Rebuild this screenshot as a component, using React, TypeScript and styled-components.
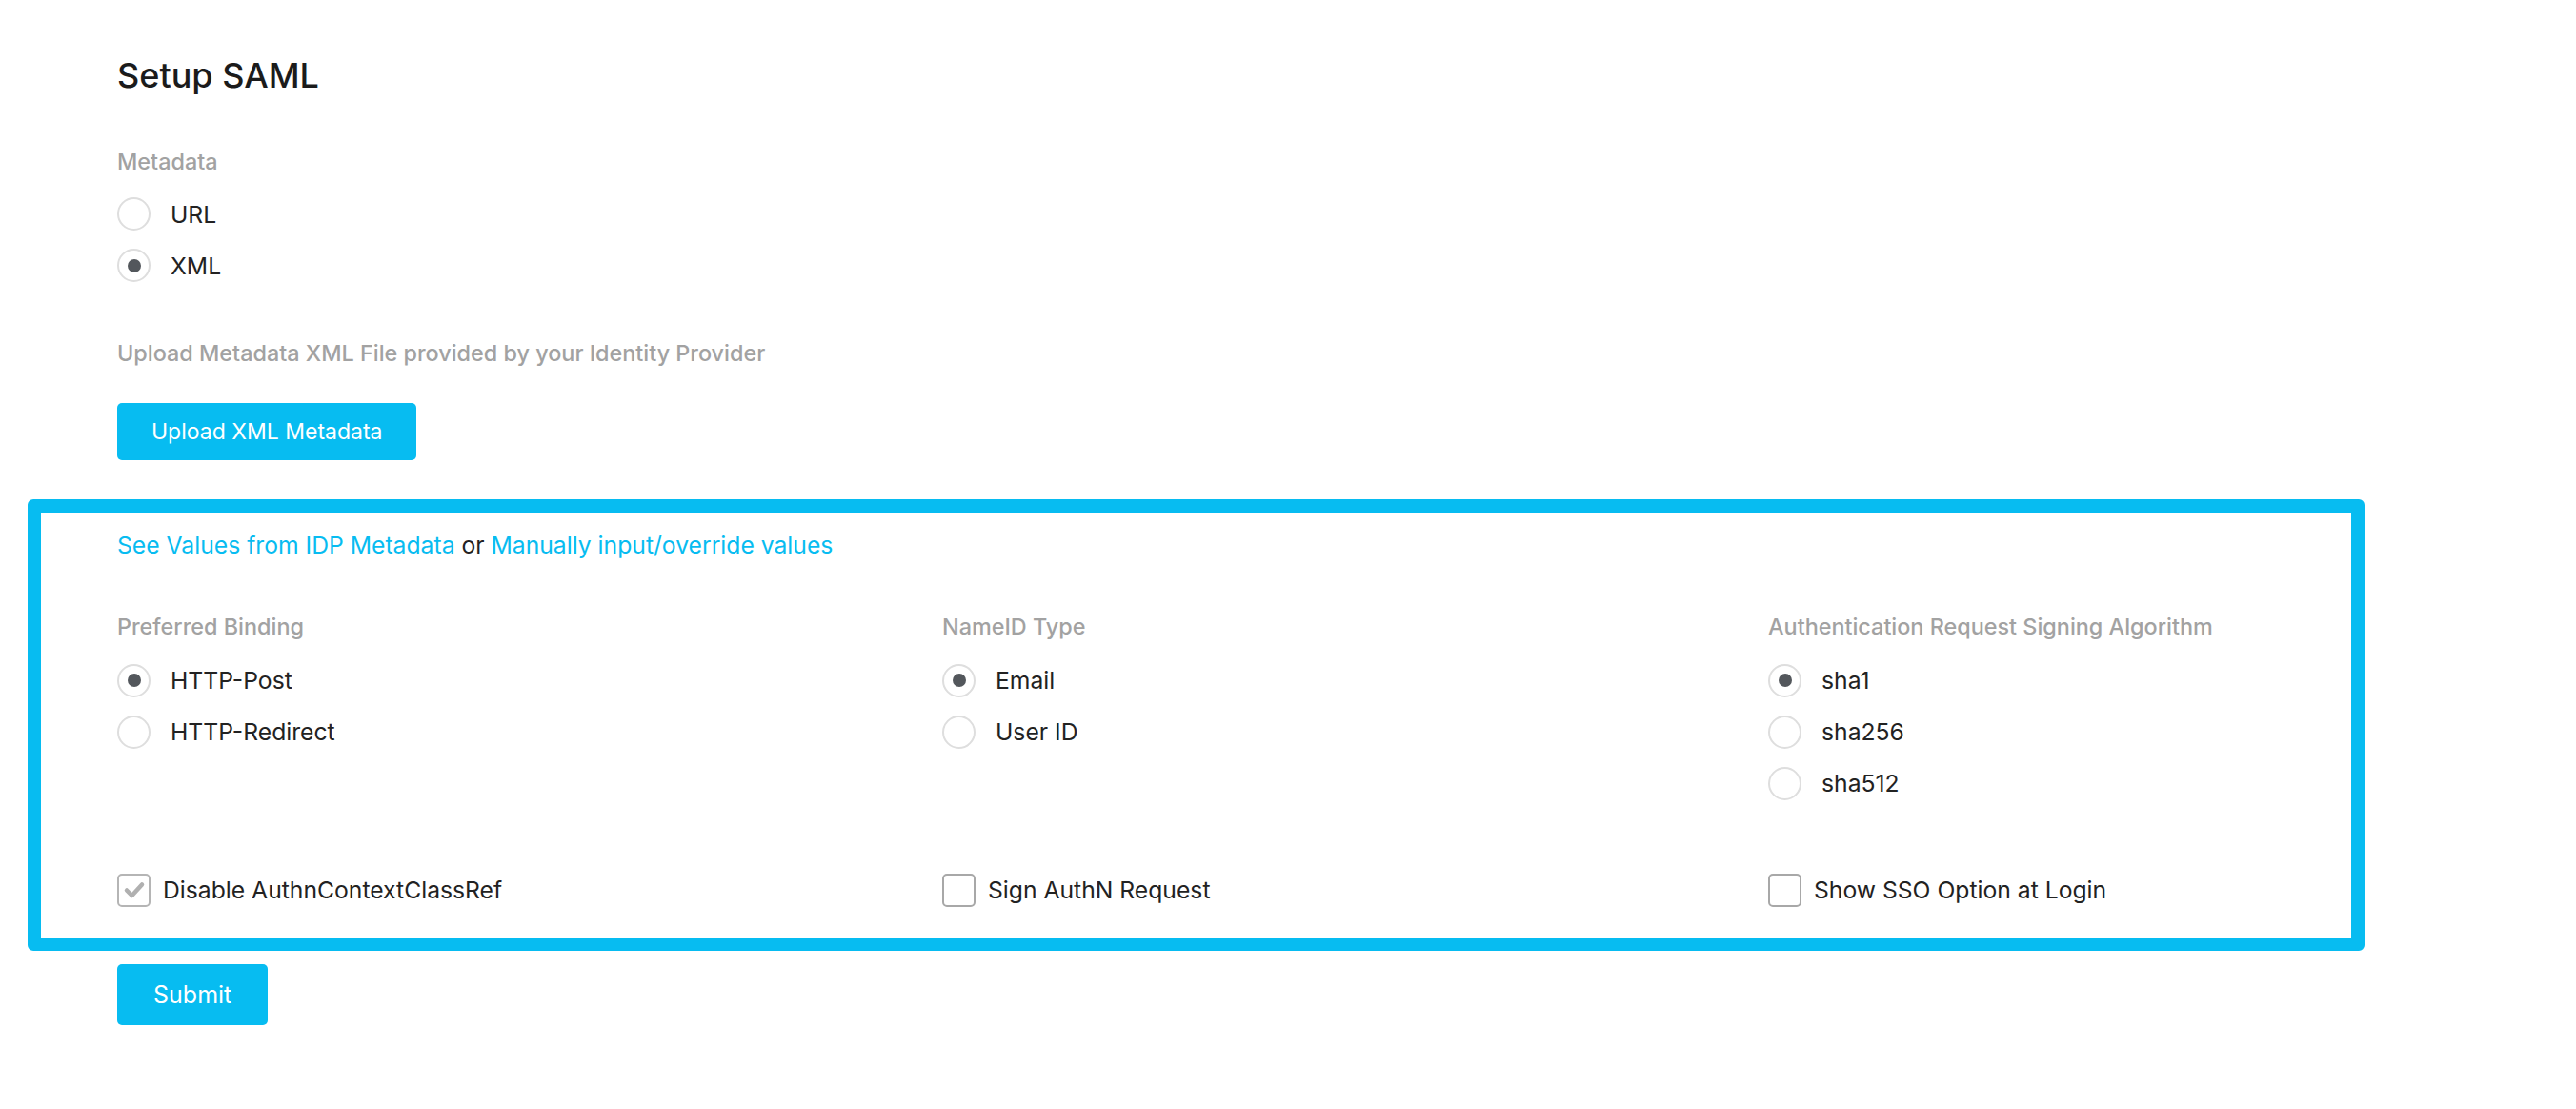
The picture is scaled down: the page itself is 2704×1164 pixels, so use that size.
import styled, { createGlobalStyle } from "styled-components";

const GlobalStyle = createGlobalStyle`
  body {
    margin: 0;
    background: #ffffff;
    font-family: Inter, "Noto Sans", sans-serif;
    color: #222222;
  }
`;

const BLUE = "#07bcf1";

const Page = styled.div`
  padding: 0 29px 80px;
`;

const Intro = styled.section`
  padding: 61px 0 0 94px;
`;

const Title = styled.h1`
  margin: 0;
  font-size: 36px;
  line-height: 1;
  font-weight: 500;
  color: #1b1b1b;
`;

const Label = styled.div<{ $top?: number }>`
  margin-top: ${(p) => p.$top ?? 0}px;
  font-size: 23.4px;
  line-height: 1;
  font-weight: 500;
  color: #a2a2a2;
`;

const RadioList = styled.div<{ $top: number }>`
  display: flex;
  flex-direction: column;
  gap: 19px;
  margin-top: ${(p) => p.$top}px;
`;

const Option = styled.label`
  display: flex;
  align-items: center;
  gap: 21px;
  font-size: 24.7px;
  line-height: 1;
  color: #222222;
`;

const Circle = styled.span<{ $checked?: boolean }>`
  box-sizing: border-box;
  width: 35px;
  height: 35px;
  border-radius: 50%;
  border: 2px solid #dedede;
  display: flex;
  align-items: center;
  justify-content: center;
  &::after {
    content: "";
    display: ${(p) => (p.$checked ? "block" : "none")};
    width: 14px;
    height: 14px;
    border-radius: 50%;
    background: #53575c;
  }
`;

const Button = styled.button<{ $height: number; $pad: number; $top: number; $size: number }>`
  display: block;
  margin-top: ${(p) => p.$top}px;
  height: ${(p) => p.$height}px;
  padding: 0 ${(p) => p.$pad}px;
  border: none;
  border-radius: 5px;
  background: ${BLUE};
  color: #ffffff;
  font-family: inherit;
  font-size: ${(p) => p.$size}px;
  font-weight: 400;
  cursor: pointer;
`;

const Panel = styled.section`
  box-sizing: border-box;
  width: 2453px;
  margin-top: 41px;
  border: 14px solid ${BLUE};
  border-radius: 6px;
  padding: 22px 0 32px 80px;
`;

const LinkLine = styled.div`
  font-size: 24.7px;
  line-height: 1;
  color: #222222;
`;

const TextLink = styled.a`
  color: ${BLUE};
  text-decoration: none;
  cursor: pointer;
`;

const Grid = styled.div`
  display: grid;
  grid-template-columns: 866px 867px 1fr;
  row-gap: 77px;
  margin-top: 61px;
`;

const Group = styled.div``;

const CheckOption = styled.label`
  display: flex;
  align-items: center;
  gap: 13px;
  font-size: 24.7px;
  line-height: 1;
  color: #222222;
`;

const CheckBox = styled.span<{ $disabled?: boolean }>`
  box-sizing: border-box;
  width: 35px;
  height: 35px;
  border-radius: 5px;
  border: 2px solid ${(p) => (p.$disabled ? "#b5b5b5" : "#a8a8a8")};
  display: flex;
  align-items: center;
  justify-content: center;
`;

const Footer = styled.div`
  padding-left: 94px;
`;

interface IGroup {
  label: string;
  options: string[];
  selected: string;
}

const groups: IGroup[] = [
  { label: "Preferred Binding", options: ["HTTP-Post", "HTTP-Redirect"], selected: "HTTP-Post" },
  { label: "NameID Type", options: ["Email", "User ID"], selected: "Email" },
  {
    label: "Authentication Request Signing Algorithm",
    options: ["sha1", "sha256", "sha512"],
    selected: "sha1",
  },
];

const checks = [
  { label: "Disable AuthnContextClassRef", checked: true, disabled: true },
  { label: "Sign AuthN Request", checked: false, disabled: false },
  { label: "Show SSO Option at Login", checked: false, disabled: false },
];

function App() {
  return (
    <>
      <GlobalStyle />
      <Page>
        <Intro>
          <Title>Setup SAML</Title>
          <Label $top={61}>Metadata</Label>
          <RadioList $top={26}>
            <Option>
              <Circle />
              URL
            </Option>
            <Option>
              <Circle $checked />
              XML
            </Option>
          </RadioList>
          <Label $top={63}>Upload Metadata XML File provided by your Identity Provider</Label>
          <Button $top={40} $height={60} $pad={36} $size={23}>
            Upload XML Metadata
          </Button>
        </Intro>
        <Panel>
          <LinkLine>
            <TextLink>See Values from IDP Metadata</TextLink> or{" "}
            <TextLink>Manually input/override values</TextLink>
          </LinkLine>
          <Grid>
            {groups.map((g) => (
              <Group key={g.label}>
                <Label>{g.label}</Label>
                <RadioList $top={28}>
                  {g.options.map((o) => (
                    <Option key={o}>
                      <Circle $checked={o === g.selected} />
                      {o}
                    </Option>
                  ))}
                </RadioList>
              </Group>
            ))}
            {checks.map((c) => (
              <CheckOption key={c.label}>
                <CheckBox $disabled={c.disabled}>
                  {c.checked && (
                    <svg width="24" height="24" viewBox="0 0 24 24">
                      <path
                        d="M4 12.5 L9.5 18 L20 6.5"
                        fill="none"
                        stroke="#b0b0b0"
                        strokeWidth="4.5"
                        strokeLinecap="round"
                        strokeLinejoin="round"
                      />
                    </svg>
                  )}
                </CheckBox>
                {c.label}
              </CheckOption>
            ))}
          </Grid>
        </Panel>
        <Footer>
          <Button $top={14} $height={64} $pad={38} $size={25}>
            Submit
          </Button>
        </Footer>
      </Page>
    </>
  );
}

export default App;
